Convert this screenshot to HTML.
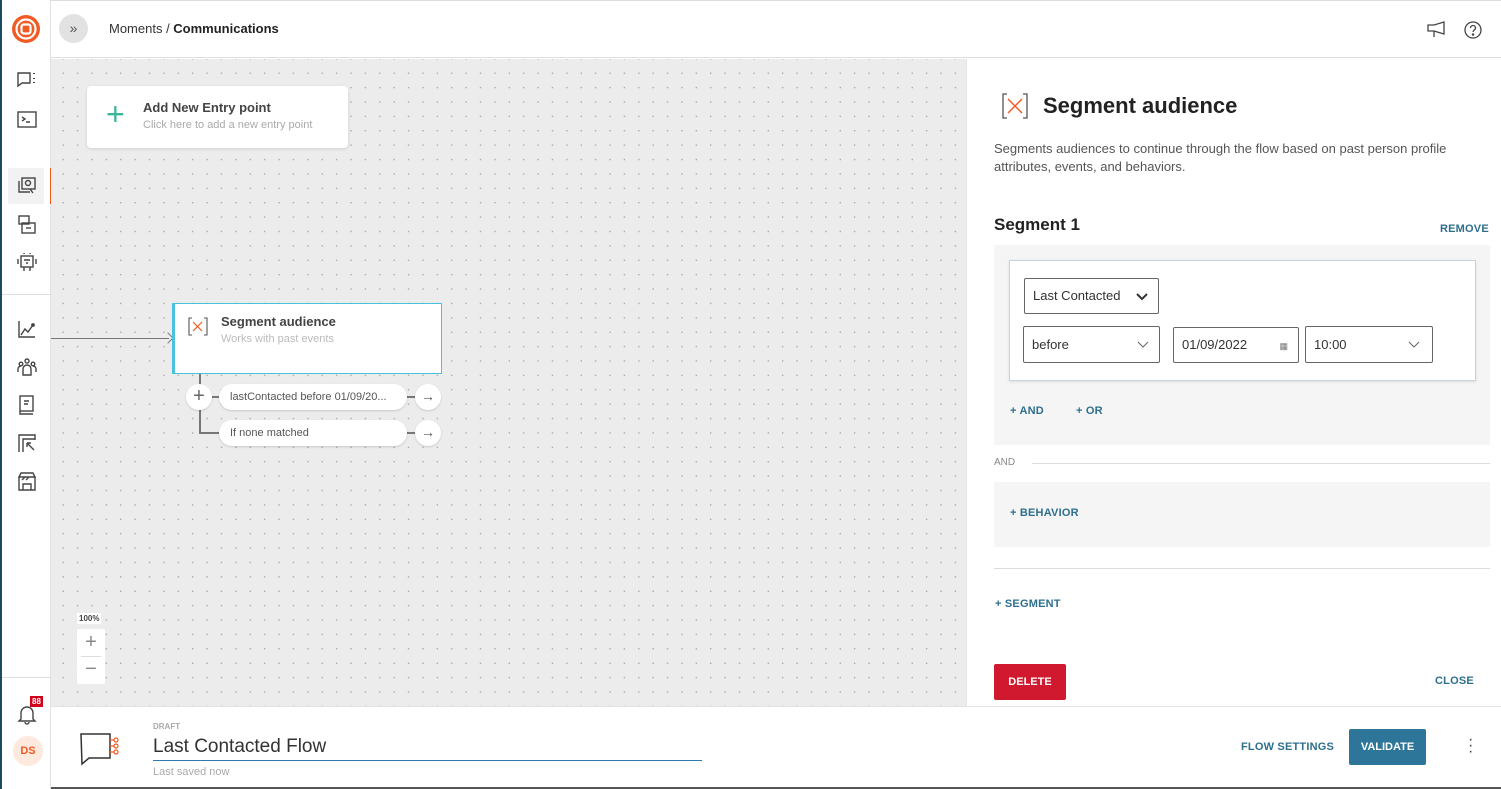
<!DOCTYPE html>
<html><head><meta charset="utf-8"><style>
*{box-sizing:border-box;margin:0;padding:0}
body{width:1501px;height:789px;overflow:hidden;font-family:"Liberation Sans",sans-serif;background:#fff;position:relative;color:#222}
.abs{position:absolute}
#side{left:0;top:0;width:51px;height:789px;background:#fff;border-left:2px solid #1c4a63;border-right:1px solid #e2e2e2}
#top{left:51px;top:0;width:1450px;height:58px;background:#fff;border-bottom:1px solid #ddd;border-top:1px solid #ddd}
#canvas{left:51px;top:59px;width:915px;height:647px;background-color:#ececec;background-image:radial-gradient(circle,#a8a8a8 0.55px,transparent 1px);background-size:14.4px 14.4px;background-position:5px 7px}
#panel{left:966px;top:59px;width:535px;height:647px;background:#fff;border-left:1px solid #e5e5e5}
#bottom{left:51px;top:706px;width:1450px;height:83px;background:#fff;border-top:1px solid #e4e4e4;border-bottom:2px solid #555}
.ic{position:absolute;left:14px}
.card{background:#fff;border-radius:4px;box-shadow:0 1px 3px rgba(0,0,0,.12)}
.pill{position:absolute;background:#fff;border-radius:13px;height:26px;font-size:11px;color:#555;line-height:26px;padding-left:11px;box-shadow:0 1px 2px rgba(0,0,0,.15)}
.circ{position:absolute;width:26px;height:26px;border-radius:50%;background:#fff;box-shadow:0 1px 2px rgba(0,0,0,.15)}
.sel{position:absolute;border:1px solid #666;border-radius:2px;height:37px;font-size:13px;line-height:35px;padding-left:8px;color:#333;background:#fff}
.lnk{position:absolute;font-size:11px;font-weight:bold;color:#2e6f8e;letter-spacing:.2px}
</style></head><body>
<div id="side" class="abs">
 <svg class="abs" style="left:10px;top:15px" width="28" height="28" viewBox="0 0 28 28"><circle cx="14" cy="14" r="14" fill="#f15a22"/><circle cx="14" cy="14" r="9.5" fill="none" stroke="#fff" stroke-width="2.2"/><rect x="9.5" y="9.5" width="9" height="9" rx="2.2" fill="none" stroke="#fff" stroke-width="2.2"/></svg>
 <svg class="ic" style="top:70px" width="22" height="20" viewBox="0 0 22 20" fill="none" stroke="#444" stroke-width="1.4"><path d="M2 3h12v10H6l-4 3z"/><path d="M18 3v1M18 8v1M18 12v1" stroke-width="2"/></svg>
 <svg class="ic" style="top:110px" width="22" height="20" viewBox="0 0 22 20" fill="none" stroke="#444" stroke-width="1.4"><rect x="2" y="2" width="18" height="15"/><path d="M6 7l3 2-3 2M10 12h4"/></svg>
 <div class="abs" style="left:6px;top:168px;width:36px;height:36px;background:#f2f2f2"></div>
 <div class="abs" style="left:48px;top:168px;width:2px;height:36px;background:#f15a22"></div>
 <svg class="ic" style="top:175px" width="22" height="22" viewBox="0 0 22 22" fill="none" stroke="#444" stroke-width="1.4"><path d="M3 6v11h11"/><rect x="6" y="3" width="13" height="11"/><circle cx="12" cy="8" r="2.5"/><path d="M14 14l3 4"/></svg>
 <svg class="ic" style="top:213px" width="22" height="22" viewBox="0 0 22 22" fill="none" stroke="#444" stroke-width="1.4"><rect x="3" y="3" width="10" height="8"/><rect x="6" y="10" width="13" height="10"/><path d="M10 15h5"/></svg>
 <svg class="ic" style="top:251px" width="22" height="22" viewBox="0 0 22 22" fill="none" stroke="#444" stroke-width="1.4"><rect x="5" y="5" width="12" height="11"/><path d="M8 2v1M14 2v1M2 8v5M20 8v5M8 16v4M14 16v4M8 9h6M10 12h2"/></svg>
 <div class="abs" style="left:0;top:294px;width:50px;height:1px;background:#ddd"></div>
 <svg class="ic" style="top:318px" width="22" height="22" viewBox="0 0 22 22" fill="none" stroke="#444" stroke-width="1.4"><path d="M3 3v16h16M5 17l4-6 3 3 5-7"/><circle cx="17" cy="7" r="1.2" fill="#444"/></svg>
 <svg class="ic" style="top:356px" width="22" height="22" viewBox="0 0 22 22" fill="none" stroke="#444" stroke-width="1.4"><circle cx="11" cy="5" r="2"/><circle cx="5" cy="8" r="1.8"/><circle cx="17" cy="8" r="1.8"/><path d="M7 19v-6a4 4 0 018 0v6zM2 16v-3a3 3 0 013-3M20 16v-3a3 3 0 00-3-3"/></svg>
 <svg class="ic" style="top:394px" width="22" height="22" viewBox="0 0 22 22" fill="none" stroke="#444" stroke-width="1.4"><rect x="4" y="2" width="13" height="15"/><path d="M4 17v3h13M8 7h5M8 10h4"/></svg>
 <svg class="ic" style="top:432px" width="22" height="22" viewBox="0 0 22 22" fill="none" stroke="#444" stroke-width="1.4"><path d="M3 20V3h16v5M7 20V7h12M11 11l7 7M11 11v4M11 11h4"/></svg>
 <svg class="ic" style="top:470px" width="22" height="22" viewBox="0 0 22 22" fill="none" stroke="#444" stroke-width="1.4"><path d="M3 7h16v13H3zM5 3h12l2 4H3zM7 20v-6h8v6M6 10l3-3M10 10l3-3"/></svg>
 <div class="abs" style="left:0;top:677px;width:50px;height:1px;background:#ddd"></div>
 <svg class="ic" style="top:703px" width="22" height="22" viewBox="0 0 22 22" fill="none" stroke="#444" stroke-width="1.4"><path d="M5 16V10a6 6 0 0112 0v6l2 2H3zM9 19a2 2 0 004 0"/></svg>
 <div class="abs" style="left:28px;top:696px;background:#d0021b;color:#fff;font-size:8px;font-weight:bold;padding:1px 2px;line-height:9px">88</div>
 <div class="abs" style="left:11px;top:736px;width:30px;height:30px;border-radius:50%;background:#fde9dd;color:#f15a22;font-size:11px;font-weight:bold;text-align:center;line-height:30px">DS</div>
</div>
<div id="top" class="abs">
 <div class="abs" style="left:8px;top:13px;width:29px;height:29px;border-radius:50%;background:#e2e2e2;color:#555;font-size:14px;text-align:center;line-height:28px">»</div>
 <div class="abs" style="left:58px;top:20px;font-size:13px;color:#333">Moments / <b style="color:#222">Communications</b></div>
 <svg class="abs" style="left:1375px;top:20px" width="22" height="18" viewBox="0 0 22 18" fill="none" stroke="#444" stroke-width="1.3"><path d="M2 4h6l10-3v12l-10-3H2zM8 10v6"/></svg>
 <svg class="abs" style="left:1412px;top:19px" width="20" height="20" viewBox="0 0 20 20" fill="none" stroke="#444" stroke-width="1.3"><circle cx="10" cy="10" r="8"/><path d="M7.5 8a2.5 2.5 0 115 0c0 2-2.5 2-2.5 4"/><circle cx="10" cy="14.5" r=".6" fill="#444"/></svg>
</div>
<div id="canvas" class="abs">
 <div class="card abs" style="left:36px;top:27px;width:261px;height:62px">
  <div class="abs" style="left:19px;top:10px;color:#3cb59a;font-size:32px;font-weight:200;line-height:36px">+</div>
  <div class="abs" style="left:56px;top:14px;font-size:13px;font-weight:bold;color:#444">Add New Entry point</div>
  <div class="abs" style="left:56px;top:33px;font-size:11px;color:#aaa">Click here to add a new entry point</div>
 </div>
 <div class="abs" style="left:0;top:279px;width:118px;height:1px;background:#777"></div>
 <div class="abs" style="left:113px;top:275px;width:8px;height:8px;border-top:1px solid #777;border-right:1px solid #777;transform:rotate(45deg)"></div>
 <div class="abs" style="left:121px;top:244px;width:270px;height:71px;background:#fff;border:1px solid #4bc1dd;border-left:3px solid #4bc1dd"></div>
 <svg class="abs" style="left:137px;top:258px" width="20" height="19" viewBox="0 0 20 19" fill="none"><path d="M4 1H1v17h3M16 1h3v17h-3" stroke="#555" stroke-width="1.1"/><path d="M5 5l9 9M14 5l-9 9" stroke="#f15a22" stroke-width="1.2"/></svg>
 <div class="abs" style="left:170px;top:255px;font-size:13px;font-weight:bold;color:#444">Segment audience</div>
 <div class="abs" style="left:170px;top:274px;font-size:11px;color:#bbb">Works with past events</div>
 <div class="abs" style="left:148px;top:315px;width:2px;height:59px;background:#777"></div>
 <div class="abs" style="left:148px;top:373px;width:22px;height:2px;background:#777"></div>
 <div class="abs" style="left:158px;top:337px;width:220px;height:2px;background:#777"></div>
 <div class="abs" style="left:350px;top:373px;width:20px;height:2px;background:#777"></div>
 <div class="circ" style="left:135px;top:325px;text-align:center;line-height:24px;font-size:20px;color:#666;font-weight:300">+</div>
 <div class="pill" style="left:168px;top:325px;width:188px">lastContacted before 01/09/20...</div>
 <div class="circ" style="left:364px;top:325px;text-align:center;line-height:25px;font-size:14px;color:#555">→</div>
 <div class="pill" style="left:168px;top:361px;width:188px">If none matched</div>
 <div class="circ" style="left:364px;top:361px;text-align:center;line-height:25px;font-size:14px;color:#555">→</div>
 <div class="abs" style="left:26px;top:554px;background:#fff;font-size:8px;font-weight:bold;color:#444;padding:1px 2px">100%</div>
 <div class="abs" style="left:26px;top:570px;width:28px;height:55px;background:#fff;border-radius:2px">
  <div class="abs" style="left:0;top:2px;width:28px;text-align:center;font-size:20px;color:#888">+</div>
  <div class="abs" style="left:4px;top:27px;width:20px;height:1px;background:#ddd"></div>
  <div class="abs" style="left:0;top:29px;width:28px;text-align:center;font-size:20px;color:#888">−</div>
 </div>
</div>
<div id="panel" class="abs">
 <svg class="abs" style="left:34px;top:33px" width="28" height="28" viewBox="0 0 28 28" fill="none"><path d="M6 2H2v24h4M22 2h4v24h-4" stroke="#555" stroke-width="1.3"/><path d="M7 7l14 14M21 7L7 21" stroke="#f15a22" stroke-width="1.5"/></svg>
 <div class="abs" style="left:76px;top:34px;font-size:22px;font-weight:bold;color:#222">Segment audience</div>
 <div class="abs" style="left:27px;top:81px;width:480px;font-size:13px;line-height:18px;color:#555">Segments audiences to continue through the flow based on past person profile attributes, events, and behaviors.</div>
 <div class="abs" style="left:27px;top:156px;font-size:17px;font-weight:bold;color:#222">Segment 1</div>
 <div class="lnk" style="left:473px;top:164px">REMOVE</div>
 <div class="abs" style="left:27px;top:186px;width:496px;height:200px;background:#f5f5f5"></div>
 <div class="abs" style="left:42px;top:201px;width:467px;height:121px;background:#fff;border:1px solid #c8d3dd;box-shadow:0 1px 3px rgba(0,0,0,.1)"></div>
 <div class="sel" style="left:57px;top:219px;width:135px;height:36px;line-height:34px">Last Contacted<svg class="abs" style="right:10px;top:14px" width="12" height="8"><path d="M1 1l5 5 5-5" fill="none" stroke="#333" stroke-width="2"/></svg></div>
 <div class="sel" style="left:56px;top:267px;width:137px">before<svg class="abs" style="right:10px;top:14px" width="12" height="7"><path d="M1 1l5 5 5-5" fill="none" stroke="#666"/></svg></div>
 <div class="sel" style="left:206px;top:268px;width:126px;height:36px;line-height:34px">01/09/2022<span class="abs" style="right:10px;top:1px;font-size:9px;color:#777">▦</span></div>
 <div class="sel" style="left:338px;top:267px;width:128px">10:00<svg class="abs" style="right:12px;top:14px" width="12" height="7"><path d="M1 1l5 5 5-5" fill="none" stroke="#666"/></svg></div>
 <div class="lnk" style="left:43px;top:346px">+ AND</div>
 <div class="lnk" style="left:109px;top:346px">+ OR</div>
 <div class="abs" style="left:27px;top:398px;font-size:10px;color:#888">AND</div>
 <div class="abs" style="left:65px;top:404px;width:458px;height:1px;background:#ddd"></div>
 <div class="abs" style="left:27px;top:423px;width:496px;height:65px;background:#f5f5f5"></div>
 <div class="lnk" style="left:43px;top:448px">+ BEHAVIOR</div>
 <div class="abs" style="left:27px;top:509px;width:496px;height:1px;background:#ddd"></div>
 <div class="lnk" style="left:28px;top:539px">+ SEGMENT</div>
 <div class="abs" style="left:27px;top:605px;width:72px;height:36px;background:#d0192f;color:#fff;font-size:11px;font-weight:bold;text-align:center;line-height:36px;border-radius:2px">DELETE</div>
 <div class="lnk" style="left:468px;top:616px">CLOSE</div>
</div>
<div id="bottom" class="abs">
 <svg class="abs" style="left:27px;top:24px" width="46" height="36" viewBox="0 0 46 36" fill="none"><path d="M3 3h29v24H11l-7 6z" stroke="#333" stroke-width="1.5"/><path d="M32 9h4M32 15h4M32 21h4" stroke="#f15a22" stroke-width="1.3"/><circle cx="38" cy="9" r="2" stroke="#f15a22" stroke-width="1.2"/><circle cx="38" cy="15" r="2" stroke="#f15a22" stroke-width="1.2"/><circle cx="38" cy="21" r="2" stroke="#f15a22" stroke-width="1.2"/></svg>
 <div class="abs" style="left:102px;top:15px;font-size:8px;font-weight:bold;color:#aaa">DRAFT</div>
 <div class="abs" style="left:102px;top:29px;width:549px;height:25px;border-bottom:1px solid #2e7ab5;font-size:19px;color:#333">Last Contacted Flow</div>
 <div class="abs" style="left:102px;top:59px;font-size:11px;color:#aaa">Last saved now</div>
 <div class="lnk" style="left:1190px;top:34px">FLOW SETTINGS</div>
 <div class="abs" style="left:1298px;top:22px;width:77px;height:36px;background:#2e7699;color:#fff;font-size:11px;font-weight:bold;text-align:center;line-height:36px;border-radius:2px">VALIDATE</div>
 <div class="abs" style="left:1417px;top:30px;font-size:16px;color:#444;line-height:6px">·<br>·<br>·</div>
</div>
</body></html>
